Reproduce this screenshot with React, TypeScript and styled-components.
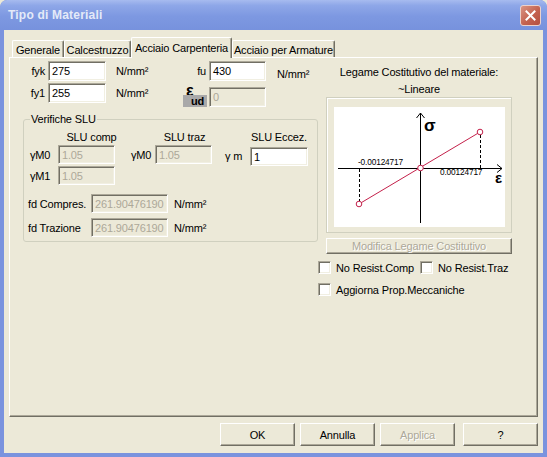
import React, { FC } from 'react';
import styled, { createGlobalStyle } from 'styled-components';

const GlobalStyle = createGlobalStyle`
  html, body {
    margin: 0;
    padding: 0;
    background: #ECE9D8;
  }
  body {
    font-family: "Liberation Sans", Arial, sans-serif;
    font-size: 11px;
    letter-spacing: -0.15px;
    color: #000;
  }
`;

const Window = styled.div`
  width: 547px;
  height: 457px;
  box-sizing: border-box;
  display: flex;
  flex-direction: column;
  overflow: hidden;
  background: #7A93DE;
  border-radius: 7px 7px 0 0;
`;

const TitleBar = styled.div`
  height: 30px;
  flex: none;
  display: flex;
  align-items: center;
  justify-content: space-between;
  padding: 0 6px 0 8px;
  background: linear-gradient(#A7BBEF 0%, #8EA7E8 18%, #7D98E1 55%, #7792DD 100%);
  border-radius: 7px 7px 0 0;
`;

const Title = styled.div`
  font-size: 12px;
  font-weight: bold;
  color: #E4EAF8;
  letter-spacing: 0.2px;
`;

const CloseButton = styled.div`
  width: 19px;
  height: 19px;
  border-radius: 3px;
  border: 1px solid #EBD2CC;
  background: linear-gradient(135deg, #D99484 0%, #C4624F 55%, #B5503F 100%);
  display: flex;
  align-items: center;
  justify-content: center;
`;

const Body = styled.div`
  flex: 1;
  margin: 0 4px 4px;
  background: #ECE9D8;
  display: flex;
  flex-direction: column;
`;

const TabStrip = styled.div`
  height: 27px;
  display: flex;
  align-items: flex-end;
  padding-left: 8px;
`;

const Tab = styled.div<{ $active?: boolean; $w: number }>`
  position: relative;
  width: ${p => p.$w}px;
  height: ${p => (p.$active ? 21 : 17)}px;
  display: flex;
  align-items: center;
  justify-content: center;
  box-sizing: border-box;
  border-top: 1px solid #fff;
  border-left: 1px solid #fff;
  border-right: 1px solid #716F64;
  box-shadow: inset -1px 0 0 #ACA899;
  border-radius: 2px 2px 0 0;
  background: #ECE9D8;
  white-space: nowrap;
  margin-bottom: ${p => (p.$active ? -1 : 0)}px;
  z-index: ${p => (p.$active ? 2 : 1)};
  padding-top: ${p => (p.$active ? 0 : 1)}px;
`;

const Panel = styled.div`
  height: 360px;
  margin: 0 5px;
  box-sizing: border-box;
  border-top: 1px solid #fff;
  border-left: 1px solid #fff;
  border-right: 1px solid #716F64;
  border-bottom: 1px solid #716F64;
  box-shadow: inset -1px -1px 0 #ACA899;
  display: flex;
  gap: 8px;
  padding: 3px 0 0 13px;
`;

const LeftCol = styled.div`
  width: 295px;
  display: flex;
  flex-direction: column;
`;

const RightCol = styled.div`
  width: 186px;
  display: flex;
  flex-direction: column;
`;

const TopGrid = styled.div`
  display: grid;
  grid-template-columns: 25px 58px 77px 26px 57px auto;
  grid-template-rows: 20px 20px;
  row-gap: 2px;
  align-items: center;
`;

const FieldLabel = styled.div`
  text-align: right;
  padding-right: 3px;
  white-space: nowrap;
`;

const Unit = styled.div<{ $pad?: number; $shift?: number }>`
  padding-left: ${p => p.$pad ?? 10}px;
  white-space: nowrap;
  margin-top: ${p => p.$shift || 0}px;
`;

const Input = styled.div<{ $disabled?: boolean; $w?: number; $h?: number; $shift?: number }>`
  box-sizing: border-box;
  width: ${p => (p.$w ? `${p.$w}px` : '100%')};
  height: ${p => p.$h ?? 20}px;
  margin-top: ${p => p.$shift || 0}px;
  margin-bottom: ${p => -(p.$shift || 0)}px;
  border: 1px solid;
  border-color: #ACA899 #fff #fff #ACA899;
  box-shadow: inset 1px 1px 0 #716F64, inset -1px -1px 0 #F1EFE2;
  background: ${p => (p.$disabled ? '#ECE9D8' : '#fff')};
  color: ${p => (p.$disabled ? '#ACA899' : '#000')};
  padding: 0 3px;
  display: flex;
  align-items: center;
  font-size: 11px;
  white-space: nowrap;
  overflow: hidden;
`;

const EpsLabel = styled.div`
  width: 24px;
  height: 20px;
  margin-top: 4px;
  margin-bottom: -4px;
  display: flex;
  flex-direction: column;
  font-weight: bold;
`;

const EpsGlyph = styled.span`
  height: 8px;
  line-height: 8px;
  padding-left: 3px;
  font-size: 16px;
`;

const EpsSub = styled.span`
  flex: 1;
  background: #A9A9A9;
  font-size: 11px;
  line-height: 12px;
  padding-left: 8px;
`;

const Group = styled.fieldset`
  margin: 10px 0 0;
  width: 295px;
  height: 129px;
  box-sizing: border-box;
  border: 1px solid #D0D0BF;
  border-radius: 3px;
  padding: 4px 0 0 6px;
  min-width: 0;
`;

const Legend = styled.legend`
  padding: 0 1px;
  line-height: 13px;
  font-size: 11px;
`;

const SluGrid = styled.div`
  display: grid;
  grid-template-columns: 28px 57px 16px 24px 57px 13px 25px 58px;
  grid-template-rows: 13px 19px 19px;
  row-gap: 2px;
  align-items: center;
`;

const Heading = styled.div<{ $col: number; $dx: number }>`
  grid-column: ${p => p.$col};
  text-align: center;
  white-space: nowrap;
  line-height: 13px;
  margin-top: 1px;
  transform: translateX(${p => p.$dx}px);
`;

const GammaLabel = styled.div<{ $col: number; $row: number; $shift?: number }>`
  grid-column: ${p => p.$col};
  grid-row: ${p => p.$row};
  white-space: nowrap;
  margin-top: ${p => p.$shift || 0}px;
`;

const Cell = styled.div<{ $col: number; $row: number }>`
  grid-column: ${p => p.$col};
  grid-row: ${p => p.$row};
  display: flex;
`;

const FdRow = styled.div<{ $top: number }>`
  display: flex;
  align-items: center;
  margin-top: ${p => p.$top}px;
  margin-left: -2px;
`;

const FdLabel = styled.div`
  width: 63px;
  white-space: nowrap;
`;

const Caption = styled.div<{ $top: number }>`
  text-align: center;
  line-height: 13px;
  margin-top: ${p => p.$top}px;
  white-space: nowrap;
`;

const Frame = styled.div`
  margin-top: 1px;
  width: 186px;
  height: 136px;
  box-sizing: border-box;
  border: 1px solid #D0D0BF;
  box-shadow: inset 1px 1px 0 #fff;
  padding: 9px 6px 5px 7px;
`;

const Plot = styled.svg`
  display: block;
  width: 171px;
  height: 120px;
  background: #fff;
`;

const Button = styled.div<{ $disabled?: boolean; $w?: number; $h?: number }>`
  box-sizing: border-box;
  width: ${p => p.$w ?? 75}px;
  height: ${p => p.$h ?? 23}px;
  border: 1px solid;
  border-color: #fff #716F64 #716F64 #fff;
  box-shadow: inset -1px -1px 0 #ACA899;
  background: #ECE9D8;
  display: flex;
  align-items: center;
  justify-content: center;
  white-space: nowrap;
  color: ${p => (p.$disabled ? '#ACA899' : '#000')};
  text-shadow: ${p => (p.$disabled ? '1px 1px 0 #fff' : 'none')};
`;

const ModifyButton = styled(Button)`
  margin-top: 5px;
`;

const CheckRow = styled.div<{ $top: number }>`
  display: flex;
  align-items: center;
  margin: ${p => p.$top}px 0 0 -8px;
  height: 13px;
`;

const CheckItem = styled.label<{ $w?: number }>`
  display: flex;
  align-items: center;
  gap: 5px;
  width: ${p => (p.$w ? `${p.$w}px` : 'auto')};
  white-space: nowrap;
`;

const CheckBox = styled.span`
  width: 13px;
  height: 13px;
  box-sizing: border-box;
  border: 1px solid;
  border-color: #ACA899 #fff #fff #ACA899;
  box-shadow: inset 1px 1px 0 #716F64, inset -1px -1px 0 #F1EFE2;
  background: #fff;
  flex: none;
`;

const ButtonBar = styled.div`
  display: flex;
  justify-content: flex-end;
  gap: 5px;
  margin-top: 6px;
  padding-right: 5px;
`;

const HelpButton = styled(Button)`
  margin-left: 3px;
`;

const Chart: FC = () => (
  <Plot viewBox="0 0 171 120">
    <g stroke="#000" strokeWidth="1" fill="none" shapeRendering="crispEdges">
      <line x1="4" y1="61.5" x2="168" y2="61.5" />
      <line x1="86.5" y1="6" x2="86.5" y2="116" />
    </g>
    <g stroke="#000" strokeWidth="1" fill="none">
      <polyline points="163,57.5 168,61.5 163,65.5" />
      <polyline points="82.5,11 86.5,6 90.5,11" />
      <line x1="146.5" y1="28" x2="146.5" y2="61" strokeDasharray="3 2" />
      <line x1="25.5" y1="62" x2="25.5" y2="94" strokeDasharray="3 2" />
    </g>
    <line x1="25" y1="97" x2="146" y2="25" stroke="#C4204A" strokeWidth="1" />
    <g stroke="#C4204A" strokeWidth="1" fill="#fff">
      <circle cx="25" cy="97" r="2.8" />
      <circle cx="86.5" cy="61" r="2.8" />
      <circle cx="146" cy="25" r="2.8" />
    </g>
    <text x="90" y="24" fontFamily="Liberation Sans, Arial, sans-serif" fontSize="17" fontWeight="bold">σ</text>
    <text x="161" y="76" fontFamily="Liberation Sans, Arial, sans-serif" fontSize="15" fontWeight="bold">ε</text>
    <text x="24" y="58" fontFamily="Liberation Sans, Arial, sans-serif" fontSize="8.3">-0.00124717</text>
    <text x="106" y="68" fontFamily="Liberation Sans, Arial, sans-serif" fontSize="8.3">0.00124717</text>
  </Plot>
);

const App: FC = () => (
  <>
    <GlobalStyle />
    <Window>
      <TitleBar>
        <Title>Tipo di Materiali</Title>
        <CloseButton>
          <svg width="11" height="11" viewBox="0 0 11 11">
            <path d="M1.5 1.5 L9.5 9.5 M9.5 1.5 L1.5 9.5" stroke="#fff" strokeWidth="2" strokeLinecap="square" />
          </svg>
        </CloseButton>
      </TitleBar>
      <Body>
        <TabStrip>
          <Tab $w={52}>Generale</Tab>
          <Tab $w={67}>Calcestruzzo</Tab>
          <Tab $w={101} $active>Acciaio Carpenteria</Tab>
          <Tab $w={103}>Acciaio per Armature</Tab>
        </TabStrip>
        <Panel>
          <LeftCol>
            <TopGrid>
              <FieldLabel>fyk</FieldLabel>
              <Input>275</Input>
              <Unit>N/mm²</Unit>
              <FieldLabel>fu</FieldLabel>
              <Input>430</Input>
              <Unit $pad={11} $shift={6}>N/mm²</Unit>
              <FieldLabel>fy1</FieldLabel>
              <Input>255</Input>
              <Unit>N/mm²</Unit>
              <EpsLabel>
                <EpsGlyph>ε</EpsGlyph>
                <EpsSub>ud</EpsSub>
              </EpsLabel>
              <Input $disabled $shift={4}>0</Input>
              <div />
            </TopGrid>
            <Group>
              <Legend>Verifiche SLU</Legend>
              <SluGrid>
                <Heading $col={2} $dx={5}>SLU comp</Heading>
                <Heading $col={5} $dx={1}>SLU traz</Heading>
                <Heading $col={8} $dx={0}>SLU Eccez.</Heading>
                <GammaLabel $col={1} $row={2}>γM0</GammaLabel>
                <Cell $col={2} $row={2}><Input $disabled $h={19}>1.05</Input></Cell>
                <GammaLabel $col={4} $row={2}>γM0</GammaLabel>
                <Cell $col={5} $row={2}><Input $disabled $h={19}>1.05</Input></Cell>
                <GammaLabel $col={7} $row={2} $shift={2}>γ m</GammaLabel>
                <Cell $col={8} $row={2}><Input $h={19} $shift={2}>1</Input></Cell>
                <GammaLabel $col={1} $row={3}>γM1</GammaLabel>
                <Cell $col={2} $row={3}><Input $disabled $h={19}>1.05</Input></Cell>
              </SluGrid>
              <FdRow $top={9}>
                <FdLabel>fd Compres.</FdLabel>
                <Input $disabled $w={77} $h={19}>261.90476190</Input>
                <Unit $pad={6}>N/mm²</Unit>
              </FdRow>
              <FdRow $top={5}>
                <FdLabel>fd Trazione</FdLabel>
                <Input $disabled $w={77} $h={19}>261.90476190</Input>
                <Unit $pad={6}>N/mm²</Unit>
              </FdRow>
            </Group>
          </LeftCol>
          <RightCol>
            <Caption $top={5}>Legame Costitutivo del materiale:</Caption>
            <Caption $top={4}>~Lineare</Caption>
            <Frame>
              <Chart />
            </Frame>
            <ModifyButton $disabled $w={186} $h={16}>Modifica Legame Costitutivo</ModifyButton>
            <CheckRow $top={7}>
              <CheckItem $w={102}>
                <CheckBox />
                No Resist.Comp
              </CheckItem>
              <CheckItem>
                <CheckBox />
                No Resist.Traz
              </CheckItem>
            </CheckRow>
            <CheckRow $top={9}>
              <CheckItem>
                <CheckBox />
                Aggiorna Prop.Meccaniche
              </CheckItem>
            </CheckRow>
          </RightCol>
        </Panel>
        <ButtonBar>
          <Button>OK</Button>
          <Button>Annulla</Button>
          <Button $disabled>Applica</Button>
          <HelpButton>?</HelpButton>
        </ButtonBar>
      </Body>
    </Window>
  </>
);

export default App;
